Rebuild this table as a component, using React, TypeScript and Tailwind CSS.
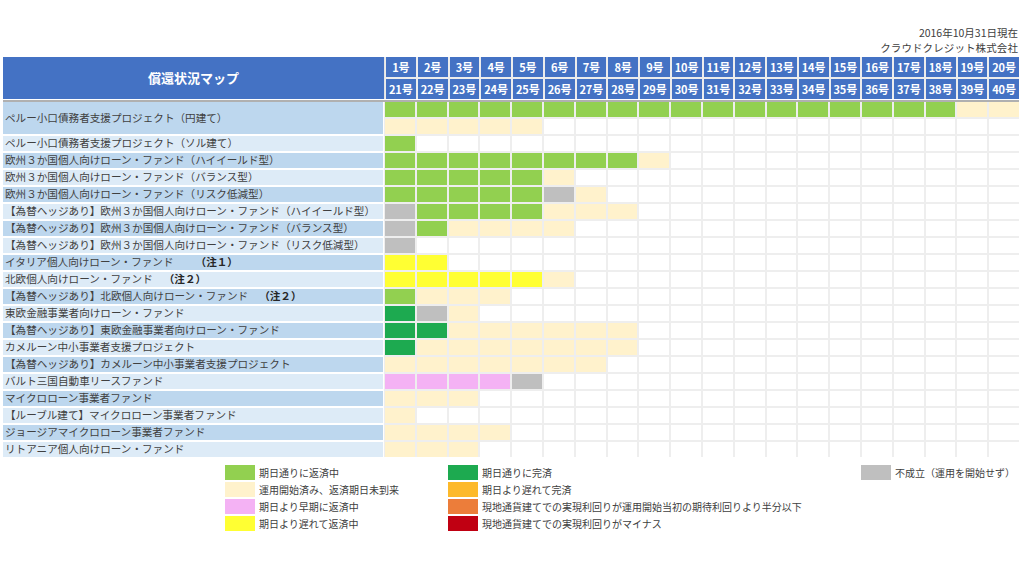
import React from "react";

const FILL: Record<string, string> = {
  g: "bg-[#92D050]",
  c: "bg-[#FFF2CC]",
  x: "bg-[#BFBFBF]",
  y: "bg-[#FFFF33]",
  d: "bg-[#1DAA50]",
  p: "bg-[#F4B2F4]",
  w: "bg-white",
};

const rows: string[] = [
  "gggggggggggggggggg" + "cc",
  "ccccc",
  "g",
  "ggggggggc",
  "gggggc",
  "gggggxc",
  "xggggccc",
  "xgcccc",
  "x",
  "yy",
  "yyyyyc",
  "gccc",
  "dxc",
  "ddcccccc",
  "dccccccc",
  "ccccccc",
  "ppppx",
  "ccc",
  "c",
  "cccc",
  "ccc",
].map((r) => r.padEnd(20, "w"));

type Label = { text: string; note?: string; noteGap?: string; dark: boolean; tall?: boolean };

const labels: Label[] = [
  { text: "ペルー小口債務者支援プロジェクト（円建て）", dark: true, tall: true },
  { text: "ペルー小口債務者支援プロジェクト（ソル建て）", dark: false },
  { text: "欧州３か国個人向けローン・ファンド（ハイイールド型）", dark: true },
  { text: "欧州３か国個人向けローン・ファンド（バランス型）", dark: false },
  { text: "欧州３か国個人向けローン・ファンド（リスク低減型）", dark: true },
  { text: "【為替ヘッジあり】欧州３か国個人向けローン・ファンド（ハイイールド型）", dark: false },
  { text: "【為替ヘッジあり】欧州３か国個人向けローン・ファンド（バランス型）", dark: true },
  { text: "【為替ヘッジあり】欧州３か国個人向けローン・ファンド（リスク低減型）", dark: false },
  { text: "イタリア個人向けローン・ファンド", note: "（注１）", noteGap: "ml-[22px]", dark: true },
  { text: "北欧個人向けローン・ファンド", note: "（注２）", noteGap: "ml-[11px]", dark: false },
  { text: "【為替ヘッジあり】北欧個人向けローン・ファンド", note: "（注２）", noteGap: "ml-[11px]", dark: true },
  { text: "東欧金融事業者向けローン・ファンド", dark: false },
  { text: "【為替ヘッジあり】東欧金融事業者向けローン・ファンド", dark: true },
  { text: "カメルーン中小事業者支援プロジェクト", dark: false },
  { text: "【為替ヘッジあり】カメルーン中小事業者支援プロジェクト", dark: true },
  { text: "バルト三国自動車リースファンド", dark: false },
  { text: "マイクロローン事業者ファンド", dark: true },
  { text: "【ルーブル建て】マイクロローン事業者ファンド", dark: false },
  { text: "ジョージアマイクロローン事業者ファンド", dark: true },
  { text: "リトアニア個人向けローン・ファンド", dark: false },
];

const top = Array.from({ length: 20 }, (_, i) => `${i + 1}号`);
const bottom = Array.from({ length: 20 }, (_, i) => `${i + 21}号`);

function LegendItem({ color, text }: { color: string; text: string }) {
  return (
    <div className="flex h-[15px] items-center gap-[4px]">
      <div className={`h-[15px] w-[30px] shrink-0 ${color}`} />
      <span className="whitespace-nowrap text-[10px] leading-none text-[#404040]">{text}</span>
    </div>
  );
}

export default function App() {
  return (
    <div
      className="relative h-[576px] w-[1024px] overflow-hidden bg-white"
      style={{ fontFamily: '"Noto Sans CJK JP", "Noto Sans", sans-serif' }}
    >
      {/* top-right info */}
      <div className="flex flex-col items-end pr-[6px] pt-[25px] text-[10.5px] leading-[15px] text-[#404040]">
        <div>2016年10月31日現在</div>
        <div className="tracking-[0.1px]">クラウドクレジット株式会社</div>
      </div>

      {/* chart */}
      <div className="ml-[3px] mt-[2px] w-[1016px]">
        {/* header */}
        <div className="flex h-[42px] gap-[1px] bg-[#e4e4e4]">
          <div className="flex w-[381px] shrink-0 items-center justify-center bg-[#4472C4] text-[13px] font-bold text-white">
            償還状況マップ
          </div>
          <div className="grid flex-1 grid-cols-20 grid-rows-2 gap-[2px] bg-[#ececec] pl-[1px]">
            {top.concat(bottom).map((t) => (
              <div
                key={t}
                className="flex items-center justify-center bg-[#4472C4] text-[11px] font-bold leading-none text-white"
              >
                {t}
              </div>
            ))}
          </div>
        </div>
        <div className="mt-[1px] h-[2px] bg-[#b0b0b0]" />

        {/* body */}
        <div className="flex gap-[1px]">
          <div className="flex w-[380px] shrink-0 flex-col gap-[2px] bg-white">
            {labels.map((l) => (
              <div
                key={l.text}
                className={`flex items-center whitespace-nowrap pl-[2px] text-[10.6px] leading-none text-[#404040] ${
                  l.tall ? "h-[32px]" : "h-[15px]"
                } ${l.dark ? "bg-[#BDD7EE]" : "bg-[#DDEBF7]"}`}
              >
                <span>{l.text}</span>
                {l.note && <span className={`${l.noteGap} font-bold text-[#262626]`}>{l.note}</span>}
              </div>
            ))}
          </div>
          <div className="grid flex-1 auto-rows-[15px] grid-cols-20 gap-[2px] bg-[#eeeeee] pl-[1px]">
            {rows.map((r, ri) =>
              r.split("").map((ch, ci) => <div key={`${ri}-${ci}`} className={FILL[ch]} />)
            )}
          </div>
        </div>
      </div>

      {/* legend */}
      <div className="mt-[8px] flex pl-[225px]">
        <div className="flex w-[223px] flex-col gap-[2px]">
          <LegendItem color="bg-[#92D050]" text="期日通りに返済中" />
          <LegendItem color="bg-[#FFF2CC]" text="運用開始済み、返済期日未到来" />
          <LegendItem color="bg-[#F4B2F4]" text="期日より早期に返済中" />
          <LegendItem color="bg-[#FFFF33]" text="期日より遅れて返済中" />
        </div>
        <div className="flex w-[413px] flex-col gap-[2px]">
          <LegendItem color="bg-[#1DAA50]" text="期日通りに完済" />
          <LegendItem color="bg-[#FDB92A]" text="期日より遅れて完済" />
          <LegendItem color="bg-[#EC7D3A]" text="現地通貨建てでの実現利回りが運用開始当初の期待利回りより半分以下" />
          <LegendItem color="bg-[#C00012]" text="現地通貨建てでの実現利回りがマイナス" />
        </div>
        <div className="flex flex-col gap-[2px]">
          <LegendItem color="bg-[#BFBFBF]" text="不成立（運用を開始せず）" />
        </div>
      </div>
    </div>
  );
}
